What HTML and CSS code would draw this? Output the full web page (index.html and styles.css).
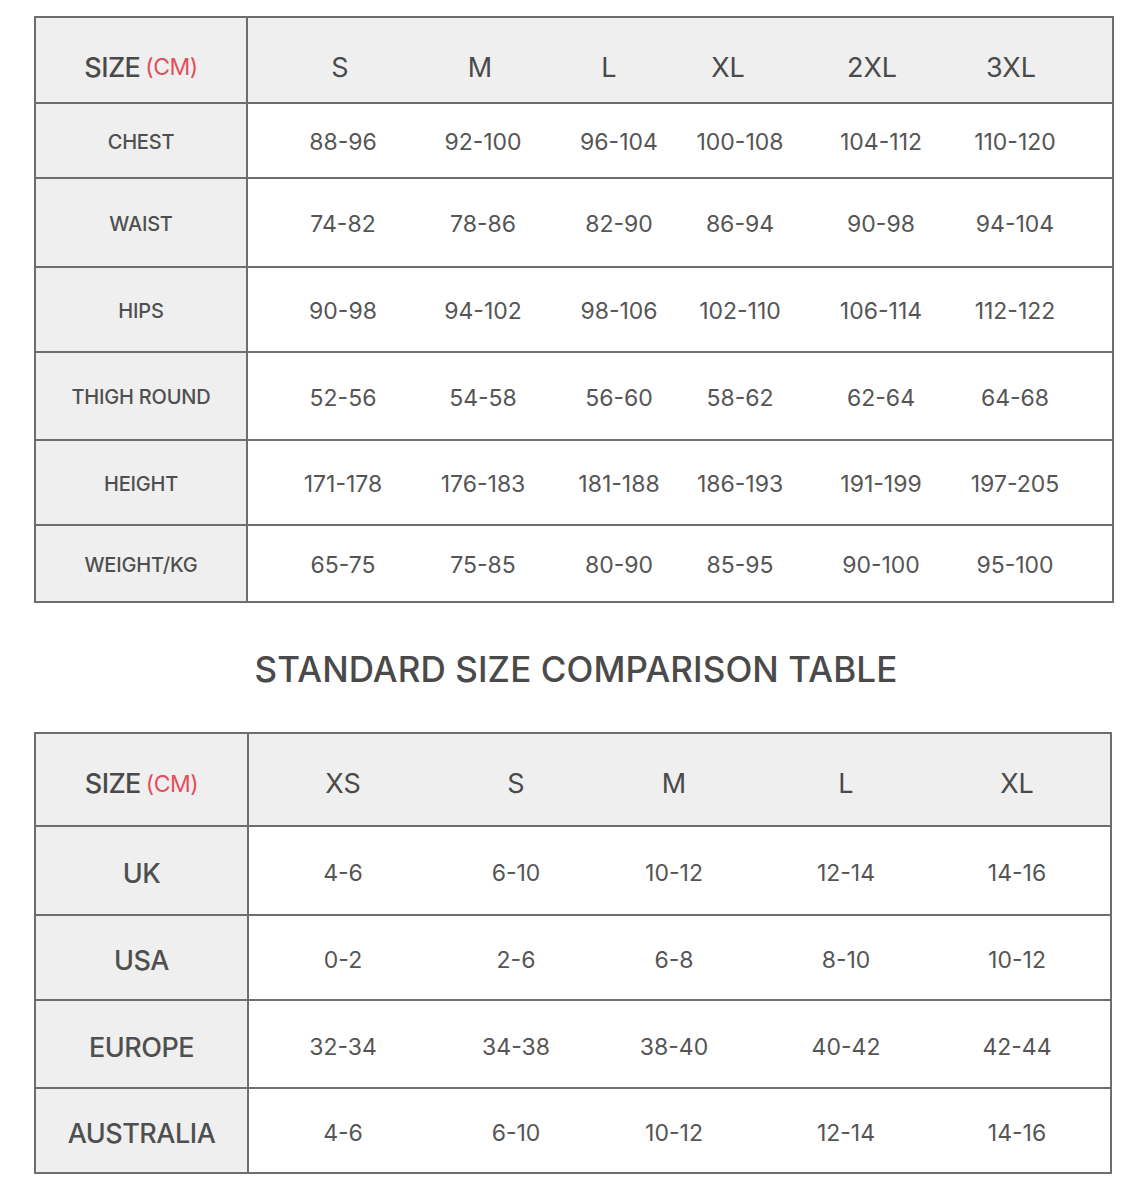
FILE: index.html
```html
<!DOCTYPE html>
<html lang="en">
<head>
<meta charset="utf-8">
<title>Size Chart</title>
<link rel="stylesheet" href="styles.css">
</head>
<body>
<main class="page">
  <section class="chart chart-body">
    <div class="row head">
      <div class="label"><span class="size">SIZE</span><span class="unit">(CM)</span></div>
      <div class="data"><span>S</span><span>M</span><span>L</span><span>XL</span><span>2XL</span><span>3XL</span></div>
    </div>
    <div class="row">
      <div class="label">CHEST</div>
      <div class="data"><span>88-96</span><span>92-100</span><span>96-104</span><span>100-108</span><span>104-112</span><span>110-120</span></div>
    </div>
    <div class="row">
      <div class="label">WAIST</div>
      <div class="data"><span>74-82</span><span>78-86</span><span>82-90</span><span>86-94</span><span>90-98</span><span>94-104</span></div>
    </div>
    <div class="row">
      <div class="label">HIPS</div>
      <div class="data"><span>90-98</span><span>94-102</span><span>98-106</span><span>102-110</span><span>106-114</span><span>112-122</span></div>
    </div>
    <div class="row">
      <div class="label">THIGH ROUND</div>
      <div class="data"><span>52-56</span><span>54-58</span><span>56-60</span><span>58-62</span><span>62-64</span><span>64-68</span></div>
    </div>
    <div class="row">
      <div class="label">HEIGHT</div>
      <div class="data"><span>171-178</span><span>176-183</span><span>181-188</span><span>186-193</span><span>191-199</span><span>197-205</span></div>
    </div>
    <div class="row">
      <div class="label">WEIGHT/KG</div>
      <div class="data"><span>65-75</span><span>75-85</span><span>80-90</span><span>85-95</span><span>90-100</span><span>95-100</span></div>
    </div>
  </section>

  <h1 class="title">STANDARD SIZE COMPARISON TABLE</h1>

  <section class="chart chart-std">
    <div class="row head">
      <div class="label"><span class="size">SIZE</span><span class="unit">(CM)</span></div>
      <div class="data"><span>XS</span><span>S</span><span>M</span><span>L</span><span>XL</span></div>
    </div>
    <div class="row">
      <div class="label">UK</div>
      <div class="data"><span>4-6</span><span>6-10</span><span>10-12</span><span>12-14</span><span>14-16</span></div>
    </div>
    <div class="row">
      <div class="label">USA</div>
      <div class="data"><span>0-2</span><span>2-6</span><span>6-8</span><span>8-10</span><span>10-12</span></div>
    </div>
    <div class="row">
      <div class="label">EUROPE</div>
      <div class="data"><span>32-34</span><span>34-38</span><span>38-40</span><span>40-42</span><span>42-44</span></div>
    </div>
    <div class="row">
      <div class="label">AUSTRALIA</div>
      <div class="data"><span>4-6</span><span>6-10</span><span>10-12</span><span>12-14</span><span>14-16</span></div>
    </div>
  </section>
</main>
</body>
</html>
```
FILE: styles.css
```css
* { box-sizing: border-box; }

html, body {
  margin: 0;
  padding: 0;
  background: #ffffff;
}

body {
  font-family: Inter, "Noto Sans", "Liberation Sans", sans-serif;
  color: #4d4d4d;
}

.page {
  width: 1144px;
  padding-top: 16px;
}

.chart {
  display: grid;
  border: 2px solid #6e6e6e;
  margin-left: 34px;
}

.chart-body {
  width: 1080px;
  grid-template-rows: 84px 75px 89px 85px 88px 85px 77px;
}

.chart-std {
  width: 1078px;
  grid-template-rows: 91px 89px 85px 88px 85px;
}

.row {
  display: grid;
  grid-template-columns: 212px 1fr;
  border-top: 2px solid #6e6e6e;
}

.row.head {
  border-top: 0;
  background: #efefef;
}

.chart-std .row {
  grid-template-columns: 213px 1fr;
}

.label {
  display: flex;
  align-items: center;
  justify-content: center;
  background: #efefef;
  border-right: 2px solid #6e6e6e;
  font-size: 20px;
  font-weight: 500;
  color: #4f4f4f;
  letter-spacing: -0.2px;
  padding-top: 2px;
}

.chart-std .label {
  font-size: 27px;
  font-weight: 500;
  letter-spacing: -0.5px;
  padding-top: 6px;
}

.chart-body .head .label,
.chart-body .head .data {
  padding-top: 14px;
}

.chart-std .head .label,
.chart-std .head .data {
  padding-top: 8px;
}

.head .label {
  font-size: 27px;
  font-weight: 500;
}

.size {
  color: #4a4a4a;
  letter-spacing: -0.6px;
}

.unit {
  color: #e0505c;
  font-size: 23px;
  font-weight: 400;
  margin-left: 5px;
  letter-spacing: -0.5px;
}

.data {
  display: grid;
  align-items: center;
  font-size: 23px;
  color: #555555;
  padding-top: 3px;
}

.data span {
  display: flex;
  justify-content: center;
  white-space: nowrap;
}

.chart-body .data {
  grid-template-columns: 134px 146px 126px 116px 166px 102px;
  padding-left: 28px;
}

.chart-body .head .data {
  grid-template-columns: 132px 148px 110px 128px 160px 118px;
  padding-left: 26px;
}

.chart-std .data {
  grid-template-columns: 168px 178px 138px 206px 136px;
  padding-left: 10px;
  padding-top: 5px;
}

.head .data {
  font-size: 27px;
  color: #4a4a4a;
  font-weight: 400;
}

.title {
  margin: 0;
  height: 129px;
  display: flex;
  align-items: center;
  justify-content: center;
  font-size: 35px;
  font-weight: 500;
  color: #4a4a4a;
  letter-spacing: 0.1px;
  padding-left: 8px;
  padding-top: 2px;
}
```
